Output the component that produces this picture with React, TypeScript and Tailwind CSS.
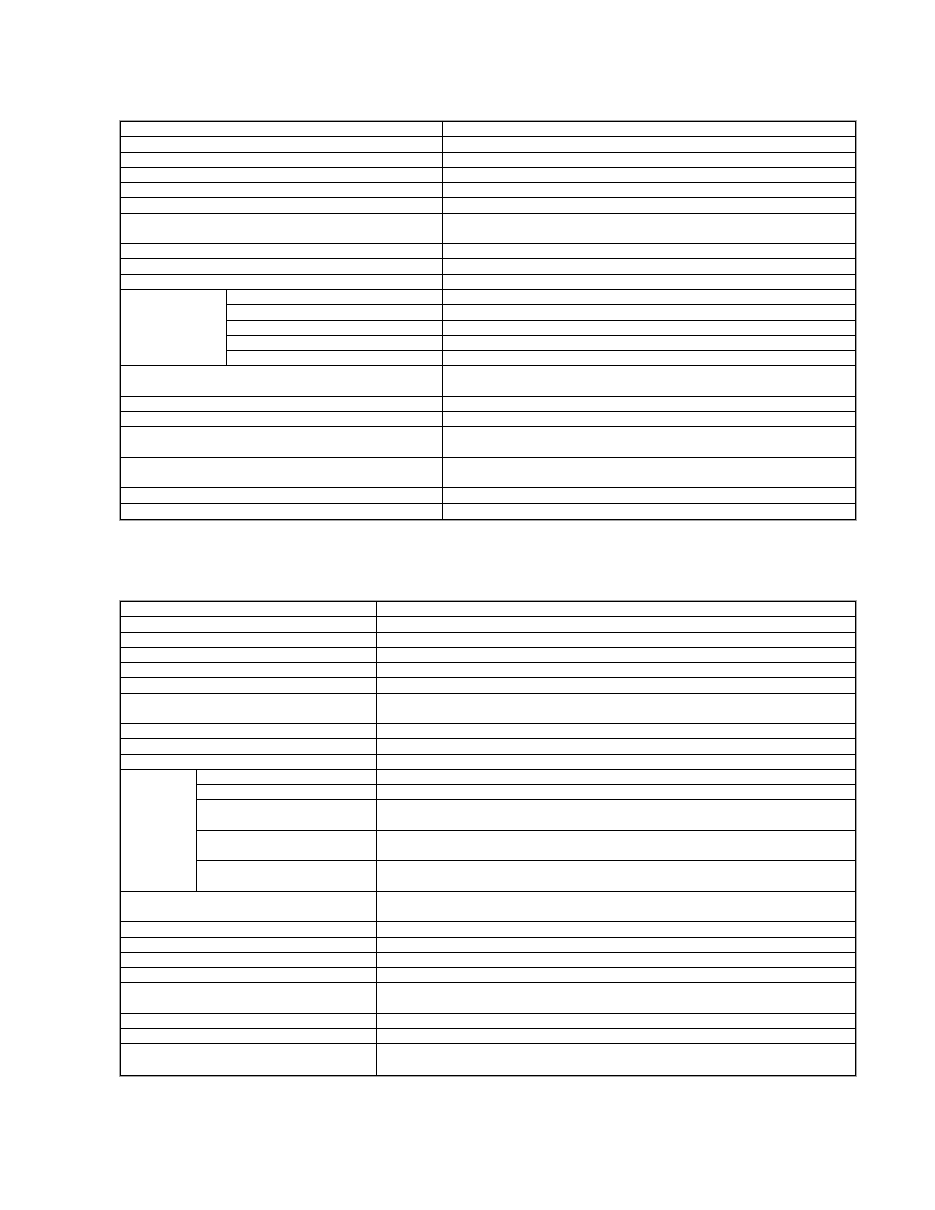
import React from "react";

type Item = { span: number } | { group: number[] };

const spanClass: Record<number, string> = {
  1: "row-span-1",
  2: "row-span-2",
  5: "row-span-5",
  8: "row-span-8",
};

const t1: Item[] = [
  { span: 1 }, { span: 1 }, { span: 1 }, { span: 1 }, { span: 1 }, { span: 1 },
  { span: 2 }, { span: 1 }, { span: 1 }, { span: 1 },
  { group: [1, 1, 1, 1, 1] },
  { span: 2 }, { span: 1 }, { span: 1 }, { span: 2 }, { span: 2 }, { span: 1 }, { span: 1 },
];

const t2: Item[] = [
  { span: 1 }, { span: 1 }, { span: 1 }, { span: 1 }, { span: 1 }, { span: 1 },
  { span: 2 }, { span: 1 }, { span: 1 }, { span: 1 },
  { group: [1, 1, 2, 2, 2] },
  { span: 2 }, { span: 1 }, { span: 1 }, { span: 1 }, { span: 1 }, { span: 2 },
  { span: 1 }, { span: 1 }, { span: 2 },
];

function Cells({ items }: { items: Item[] }) {
  const out: React.ReactNode[] = [];
  items.forEach((it, i) => {
    const last = i === items.length - 1;
    const b = last ? "" : "border-b";
    if ("span" in it) {
      out.push(
        <div key={`l${i}`} className={`col-span-2 border-r border-black ${b} ${spanClass[it.span]}`} />
      );
      out.push(<div key={`r${i}`} className={`border-black ${b} ${spanClass[it.span]}`} />);
    } else {
      const total = it.group.reduce((a, c) => a + c, 0);
      out.push(
        <div key={`g${i}`} className={`border-r border-black ${b} ${spanClass[total]}`} />
      );
      it.group.forEach((s, j) => {
        const lastSub = last && j === it.group.length - 1;
        const sb = lastSub ? "" : "border-b";
        out.push(
          <div key={`s${i}-${j}`} className={`border-r border-black ${sb} ${spanClass[s]}`} />
        );
        out.push(<div key={`sr${i}-${j}`} className={`border-black ${sb} ${spanClass[s]}`} />);
      });
    }
  });
  return <>{out}</>;
}

export default function App() {
  return (
    <div className="w-[935px] h-[1210px] bg-white pt-[121px] pl-[120px]" style={{ fontFamily: '"Liberation Sans", Arial, sans-serif' }}>
      <div className="w-[736px] h-[399px] border border-black shadow-[0_0_0_1px_#a3a3a3] grid grid-cols-[106px_216px_1fr] grid-rows-[repeat(26,minmax(0,1fr))]">
        <Cells items={t1} />
      </div>
      <div className="mt-[81px] w-[736px] h-[475px] border border-black shadow-[0_0_0_1px_#a3a3a3] grid grid-cols-[76px_180px_1fr] grid-rows-[repeat(31,minmax(0,1fr))]">
        <Cells items={t2} />
      </div>
    </div>
  );
}
